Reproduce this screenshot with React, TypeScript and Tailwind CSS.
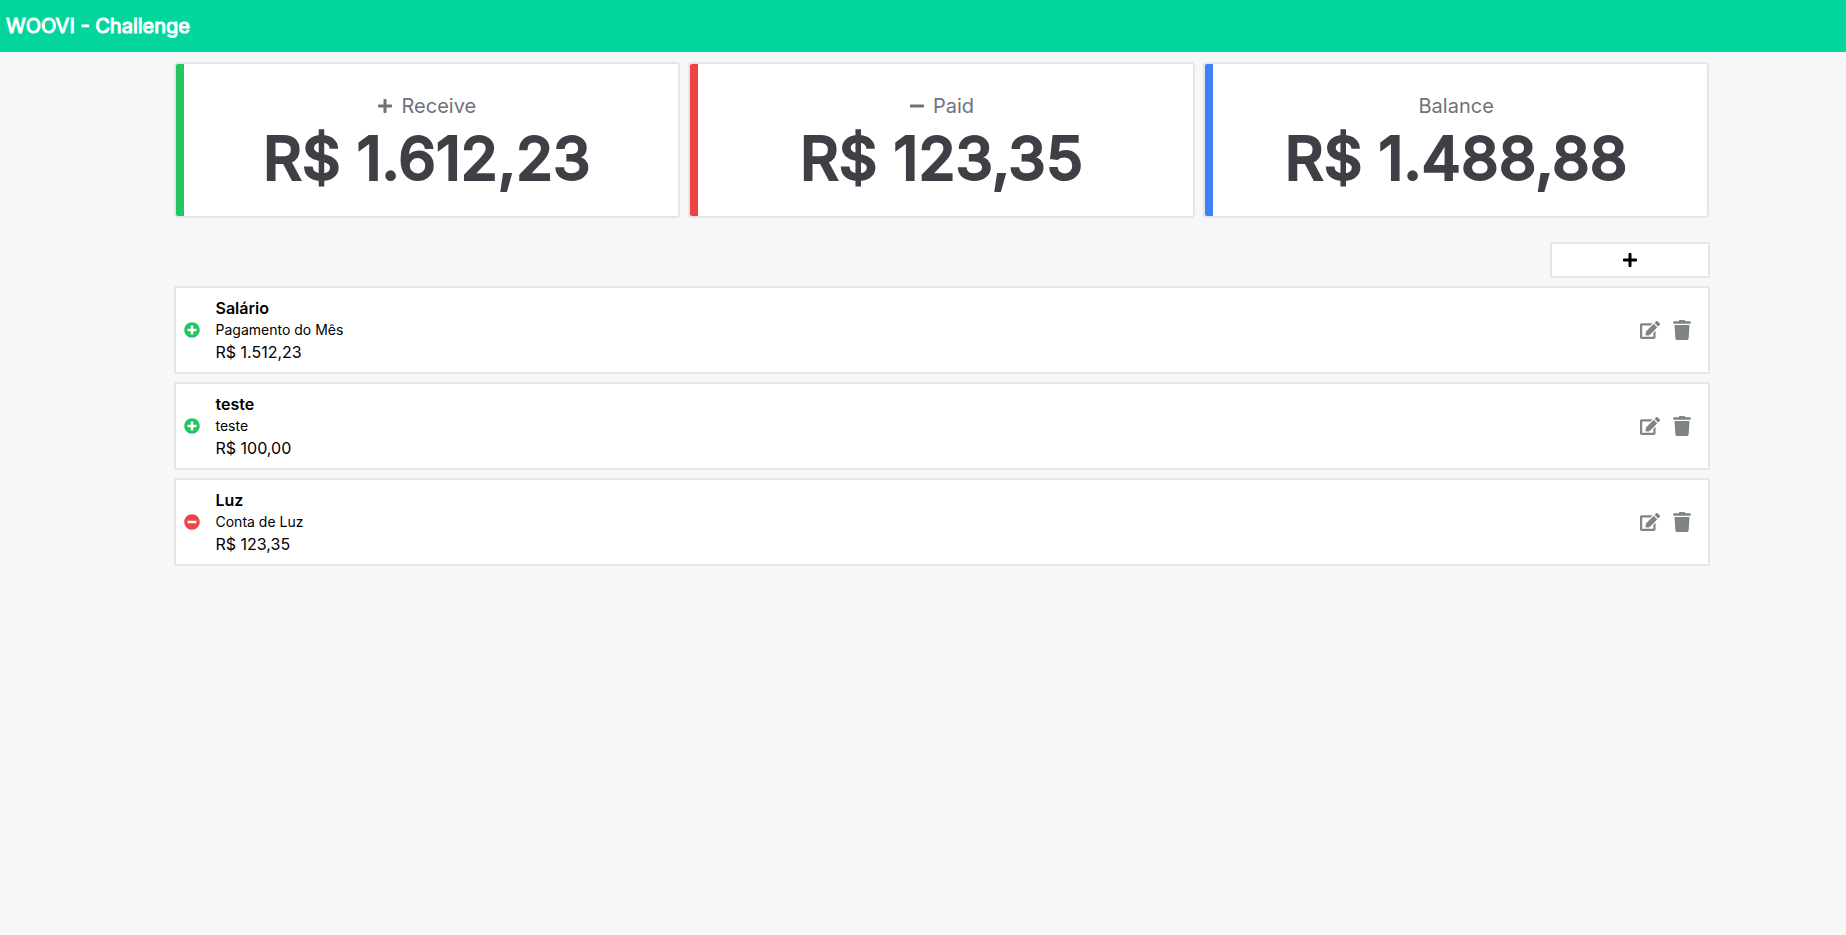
import { FaEdit, FaMinus, FaMinusCircle, FaPlus, FaPlusCircle, FaTrash } from "react-icons/fa";
import type { ReactNode } from "react";

type Summary = { label: string; value: string; stripe: string; icon?: ReactNode };
type Entry = { name: string; description: string; value: string; kind: "in" | "out" };

const summaries: Summary[] = [
  { label: "Receive", value: "R$ 1.612,23", stripe: "bg-[#22c55e]", icon: <FaPlus className="size-4" aria-hidden /> },
  { label: "Paid", value: "R$ 123,35", stripe: "bg-[#ef4444]", icon: <FaMinus className="size-4" aria-hidden /> },
  { label: "Balance", value: "R$ 1.488,88", stripe: "bg-[#3b82f6]" },
];

const entries: Entry[] = [
  { name: "Salário", description: "Pagamento do Mês", value: "R$ 1.512,23", kind: "in" },
  { name: "teste", description: "teste", value: "R$ 100,00", kind: "in" },
  { name: "Luz", description: "Conta de Luz", value: "R$ 123,35", kind: "out" },
];

function SummaryCard({ label, value, stripe, icon }: Summary) {
  return (
    <section className="relative flex flex-col items-center gap-2 overflow-hidden rounded border-2 border-[#e5e5eb] bg-white pt-7 pb-7">
      <span className={`absolute inset-y-0 left-0 w-2 ${stripe}`} />
      <h2 className="flex items-center gap-2 text-xl leading-7 text-[#71717a]">
        {icon}
        {label}
      </h2>
      <p className="text-6xl leading-15 font-medium text-[#3f3f46] [-webkit-text-stroke:2px_#3f3f46]">{value}</p>
    </section>
  );
}

function EntryRow({ name, description, value, kind }: Entry) {
  return (
    <li className="flex items-center border-2 border-[#e5e5eb] bg-white p-2">
      {kind === "in" ? (
        <FaPlusCircle className="size-4 text-[#22c55e]" aria-hidden />
      ) : (
        <FaMinusCircle className="size-4 text-[#ef4444]" aria-hidden />
      )}
      <div className="ml-4 flex-1">
        <h3 className="text-base leading-6 font-semibold">{name}</h3>
        <p className="text-sm leading-5">{description}</p>
        <p className="text-base leading-6">{value}</p>
      </div>
      <div className="mr-2 flex items-center gap-3 text-[#7f8487]">
        <button type="button" aria-label={`Edit ${name}`}>
          <FaEdit className="size-5" />
        </button>
        <button type="button" aria-label={`Delete ${name}`}>
          <FaTrash className="size-5" />
        </button>
      </div>
    </li>
  );
}

export default function App() {
  return (
    <div className="min-h-screen bg-[#f7f7f7] font-['Inter',sans-serif] text-black">
      <header className="bg-[#03d69d] px-1.5 py-3">
        <h1 className="text-xl leading-7 font-normal text-white [-webkit-text-stroke:1px_white]">WOOVI - Challenge</h1>
      </header>
      <main className="pt-2.5 pl-[37px]">
        <div className="mx-auto max-w-[1536px]">
          <div className="grid grid-cols-3 gap-2">
            {summaries.map((s) => (
              <SummaryCard key={s.label} {...s} />
            ))}
          </div>
          <div className="mt-6 flex justify-end">
            <button
              type="button"
              aria-label="Add entry"
              className="flex h-9 w-40 items-center justify-center border-2 border-[#e5e5eb] bg-white"
            >
              <FaPlus className="size-4" />
            </button>
          </div>
          <ul className="mt-2 flex flex-col gap-2">
            {entries.map((e) => (
              <EntryRow key={e.name} {...e} />
            ))}
          </ul>
        </div>
      </main>
    </div>
  );
}
